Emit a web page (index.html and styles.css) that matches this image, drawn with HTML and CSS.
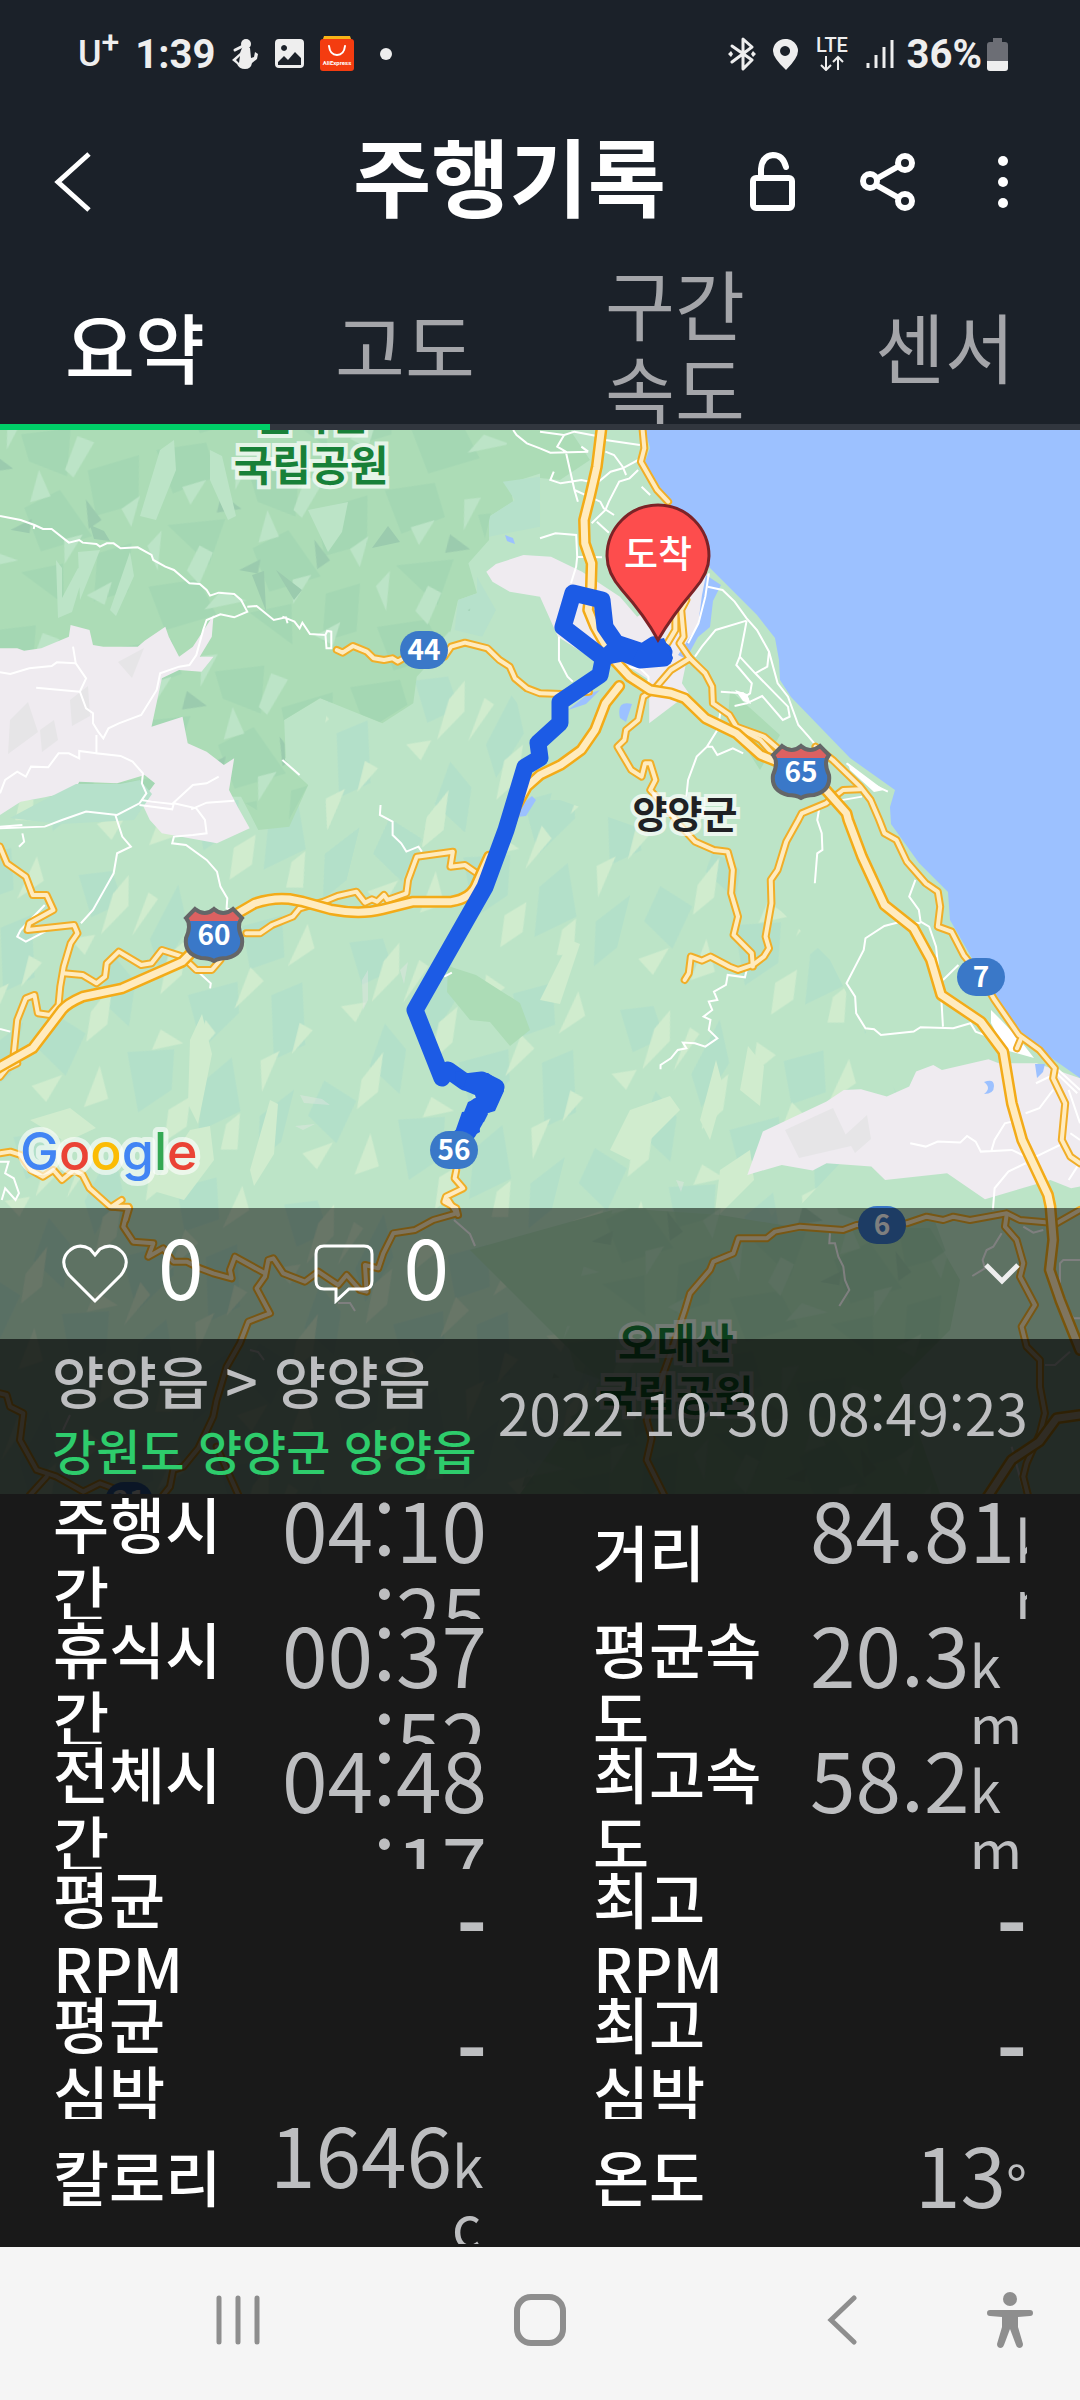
FILE: index.html
```html
<!DOCTYPE html>
<html lang="ko">

<head>
    <meta charset="UTF-8" />
    <meta name="viewport" content="width=device-width, initial-scale=1.0" />
    <title>주행기록</title>
    <link rel="stylesheet" href="styles.css">
</head>

<body>
    <div class="status-bar">
        <div class="status-left">
            <span class="carrier">U<sup>+</sup></span>
            <span class="clock">1:39</span>
            <svg width="28" height="32" viewBox="0 0 28 32">
                <circle cx="15" cy="6" r="5" fill="#eee" />
                <path d="M11 10h8l1 10 3-1 1-5 3 2-1 5-5 4q-1 6-7 6T6 26L1 22l8-7zM9 18l-4 4 3 3z" fill="#eee" fill-rule="evenodd" />
                <path d="M4 12l8-4" stroke="#eee" stroke-width="3" stroke-linecap="round" />
            </svg>
            <svg width="29" height="30" viewBox="0 0 29 30">
                <path d="M4 0h21q4 0 4 4v21q0 4-4 4H4q-4 0-4-4V4q0-4 4-4zM9 6a3 3 0 1 0 .1 0zM3 23v3h23v-7l-6-6-7 8-4-4z" fill="#eee" fill-rule="evenodd" />
            </svg>
            <svg width="34" height="36" viewBox="0 0 34 36">
                <path d="M4 0h26l2 6H2z" fill="#f9b417" />
                <rect y="3" width="34" height="32" rx="3" fill="#f43c10" />
                <path d="M9 10q1 9 8 9t8-9" fill="none" stroke="#fff" stroke-width="2" stroke-linecap="round" />
                <text x="17" y="29" class="ali">AliExpress</text>
            </svg>
            <svg class="more-dot" width="12" height="12" viewBox="0 0 12 12"><circle cx="6" cy="6" r="6" fill="#eee" /></svg>
        </div>
        <div class="status-right">
            <svg width="28" height="34" viewBox="0 0 28 34">
                <path d="M4 9l20 14-9 9V2l9 8L4 25" fill="none" stroke="#eee" stroke-width="3" stroke-linejoin="round" stroke-linecap="round" />
                <path d="M0 17l3-3 2 3-2 3zM28 17l-3-3-2 3 2 3z" fill="#eee" />
            </svg>
            <svg width="25" height="31" viewBox="0 0 25 31">
                <path d="M12 0a12 12 0 0 1 13 12q0 7-12 19Q0 19 0 12A12 12 0 0 1 12 0zM12 7a5 5 0 1 0 .1 0z" fill="#eee" fill-rule="evenodd" />
            </svg>
            <svg class="lte" width="34" height="34" viewBox="0 0 34 34">
                <text x="17" y="15">LTE</text>
                <path d="M11 19v13M6 28l5 5 5-5M23 33V20M18 25l5-5 5 5" fill="none" stroke="#eee" stroke-width="2" />
            </svg>
            <svg width="28" height="30" viewBox="0 0 28 30">
                <path d="M2 24v5M10 16v13M18 8v21M26 1v28" stroke="#eee" stroke-width="3" />
            </svg>
            <span class="battery-text">36%</span>
            <svg width="21" height="33" viewBox="0 0 21 33">
                <path d="M6 0h9v4h3q3 0 3 3v16H0V7q0-3 3-3h3z" fill="#6c6e75" />
                <path d="M0 23h21v7q0 3-3 3H3q-3 0-3-3z" fill="#eee" />
            </svg>
        </div>
    </div>

    <header class="header">
        <button class="back" aria-label="뒤로">
            <svg width="38" height="60" viewBox="0 0 38 60"><path d="M35 2L4 30l31 28" fill="none" stroke="#fff" stroke-width="5" /></svg>
        </button>
        <h1>주행기록</h1>
        <button class="action" aria-label="공개 설정">
            <svg width="46" height="60" viewBox="0 0 46 60">
                <rect x="3" y="26" width="39" height="30" rx="3" fill="none" stroke="#fff" stroke-width="6" />
                <path d="M11 26v-9q1-13 12-14 10 0 13 12" fill="none" stroke="#fff" stroke-width="6" stroke-linecap="round" />
            </svg>
        </button>
        <button class="action share" aria-label="공유">
            <svg width="56" height="58" viewBox="0 0 56 58">
                <g fill="none" stroke="#fff" stroke-width="6">
                    <path d="M16 26l23-13M16 32l23 13" />
                    <circle cx="10" cy="28" r="7" />
                    <circle cx="45" cy="10" r="7" />
                    <circle cx="45" cy="48" r="7" />
                </g>
            </svg>
        </button>
        <button class="action" aria-label="더보기">
            <svg width="10" height="52" viewBox="0 0 10 52" fill="#fff">
                <circle cx="5" cy="5" r="5" /><circle cx="5" cy="26" r="5" /><circle cx="5" cy="47" r="5" />
            </svg>
        </button>
    </header>

    <div class="tabs" role="tablist">
        <button role="tab" class="tab active" aria-selected="true">요약</button>
        <button role="tab" class="tab">고도</button>
        <button role="tab" class="tab">구간 속도</button>
        <button role="tab" class="tab">센서</button>
    </div>

    <section class="map">
        <svg class="map-canvas" viewBox="0 430 1080 1064">
            <defs>
                <!-- terrain relief -->
                <pattern id="relief" width="310" height="270" patternUnits="userSpaceOnUse" patternTransform="rotate(14) scale(.9 1)">
                    <path class="f-teal" d="M10 20l35-12 20 28-30 22zM120 5l22 40-18 50-20-30zM200 30l40-20 14 40-34 20zM70 90l30 20 5 45-40-20zM160 110l50-25 10 30-30 44zM250 90l30-20 20 60-30 22zM20 160l40 12-10 46-38-20zM110 180l50-14 8 40-30 30zM200 190l24-30 24 50-40 30zM270 210l30-34v54l-20 24z" />
                    <path class="f-light" d="M52 30l12-22 8 30-22 34zM90 20l12 4-18 42zM166 18l24 8-20 24zM270 12l14 22-24 24zM18 84l26-10-6 22zM128 76l16-20 4 36-18 24zM220 68l18 10-24 34zM60 150l16-32 5 40-18 22zM140 150l28 8-32 14zM186 130l14 10-20 36zM256 156l18-14-8 44zM16 236l30-18-10 30zM84 200l18 30-24 14zM170 226l20-18 4 30-20 20zM236 226l12-14 7 36-18 4zM288 110l16 4-16 28z" />
                </pattern>
                <pattern id="relief-forest" width="290" height="250" patternUnits="userSpaceOnUse" patternTransform="rotate(10) scale(.8)">
                    <path class="f-forest2" d="M0 20l60-20 20 40-50 30zM120 30l60-18 6 60-50-10zM210 60l60-30 10 60-50 24zM30 110l70-20-10 60zM140 120l40-30 50 50-60 30zM240 160l40-20 6 60-40 20zM20 190l60-20 30 40-60 30zM150 200l50-20 10 50z" />
                    <path class="f-land" d="M100 14l20-6-14 44zM190 20l22 4-18 48-12-8zM40 60l28-14-14 34zM150 70l20 30-24 12zM260 100l20-20-4 40zM10 140l14-22 4 50zM74 128l18 6-10 42-18-14zM196 150l22-10-16 40zM110 180l34 6-50 20zM236 214l28-22-4 30z" />
                    <path class="f-dark" d="M90 60l28 14-30 10zM214 96l10 36 14-14zM128 150l24-18v18z" />
                </pattern>

                <!-- highways -->
                <g id="highways">
                    <g transform="translate(540 430) scale(.3444 .3333)">
                        <path d="M178 -20V0L165 110 145 200 128 270 130 340 150 400 148 470 140 540 160 590 215 690 260 740 320 780 380 790 420 805 480 865 570 910 640 975 700 1000 760 1030 830 1080 890 1150 895 1170 935 1280 1000 1425 1085 1495 1135 1590 1165 1695 1280 1775 1345 1865 1370 2020 1400 2130 1475 2295 1482 2330 1490 2430 1480 2520 1510 2610 1568 2760" />
                        <path d="M230 768L190 820 160 900 120 960 60 1005 0 1035 -38 1070 -70 1130 -100 1220" />
                        <path d="M1568 2955L1500 2965 1450 3035 1370 3090 1300 3200" />
                    </g>
                    <g transform="translate(0 820) scale(.3444 .3333)">
                        <path d="M-20 752L0 740 95 685 180 570Q195 550 240 530L355 505 530 425 640 310 740 250Q790 232 840 237L880 245 960 268Q1045 285 1110 268L1200 245H1310Q1370 235 1385 190L1420 110" />
                    </g>
                </g>

                <!-- national and local roads -->
                <g id="roads">
                    <g transform="translate(0 430) scale(.3444 .3333)">
                        <path d="M978 660L995 668 1025 648 1065 665 1085 685 1115 690 1140 685 1155 695 1180 680 1290 680 1310 650 1350 638 1415 655 1450 690 1480 710 1495 745 1530 775 1568 790 1630 792 1710 785" />
                    </g>
                    <g transform="translate(540 430) scale(.3444 .3333)">
                        <path d="M298 -20V0L303 55 293 95 340 180 372 215" />
                        <path d="M425 510L410 540 417 620 405 640 435 685 480 730 500 770 502 820 550 855 570 890 650 920 690 955 740 970M800 950L850 990 930 1070 960 1110 985 1170 1000 1210 1035 1230 1065 1295 1120 1360 1155 1385 1162 1430 1155 1490 1195 1505 1230 1575 1280 1640 1320 1710 1390 1815 1450 1860 1495 1915 1490 1945 1525 2020 1515 2130 1540 2180 1568 2200" />
                        <path d="M393 520V600L370 640M570 890L640 930 700 1000M1395 1830L1385 1855" />
                        <path d="M435 685L380 720 330 780 300 800 285 870 250 900 245 930 225 950 265 1020 295 1040 305 1000 320 1000 335 1050 320 1080 380 1150 410 1190 450 1235 505 1260 545 1265 560 1320 555 1390 575 1460 562 1515 615 1570 618 1610" />
                        <path d="M930 1078L880 1080 830 1120 760 1150 750 1170 715 1235 690 1320 670 1350 672 1420 655 1520 665 1555 650 1580 618 1605 575 1620 550 1610 495 1580 470 1592 438 1580 432 1630 420 1650" />
                    </g>
                    <g transform="translate(0 820) scale(.3444 .3333)">
                        <path d="M0 80L20 130 75 170 95 225 135 225 155 270 85 310 80 330 215 315 225 340 205 370 185 440 175 500 170 555 145 585 110 580 100 525 75 535 50 600 40 700M50 730L20 745 0 770" />
                        <path d="M185 460L240 465 280 490 305 470 310 430 345 395 410 435 440 430 470 390 530 410 570 450 615 450 640 420M715 340L755 340 790 315 850 290 870 265 940 245 980 228 1035 215 1060 248 1080 238 1095 245 1115 225 1125 240 1180 220 1185 180 1210 110 1315 95 1308 140 1350 135 1385 160" />
                        <path d="M0 1000L30 995 60 1005 90 1050 125 1070 155 1050 180 1080 215 1050 240 1065 260 1105 320 1160 375 1165 365 1200" />
                        <path d="M1325 1050L1320 1075 1345 1105 1295 1130 1290 1145 1325 1165 1330 1185" />
                    </g>
                    <g transform="translate(0 1200) scale(.3333)">
                        <path d="M365 0L335 20 385 20 370 80 400 125 460 130 445 170 490 145 520 185 560 185 600 205 640 220 695 235 690 210 705 170 795 220" />
                        <path d="M1345 0L1370 40 1300 60 1245 90 1180 100 1150 160 1135 205 1095 195 1100 275 1080 270 1040 225 1015 255 955 215 915 245 850 220 820 175 805 180 795 230 770 265 810 340 745 365 720 430 680 500 650 600 640 650 595 745 550 800 520 810 510 860 490 885" />
                        <path d="M0 580L20 585 30 620 70 640 60 720 110 810 170 830 250 875 300 850 340 865M140 830L90 885M650 740L715 885" />
                    </g>
                    <g transform="translate(560 1200) scale(.3333)">
                        <path d="M315 890L290 840 260 780 275 715 260 660 325 480 375 330 390 280 450 210 460 185 520 160 535 115 620 115 645 95 720 80 850 90 890 75 1040 70 1100 50 1150 60 1180 50 1230 60 1340 40 1380 60 1490 70 1560 30" />
                        <path d="M1340 45L1335 80 1370 120 1390 190 1380 230 1425 315 1385 380 1400 440 1440 480 1440 560 1455 640 1440 700 1400 790 1390 830 1405 890" />
                    </g>
                </g>

                <g id="interstate">
                    <path d="M-19 -25Q-9 -17 0 -25 9 -17 19 -25L28 -16Q22 -9 28 4 30 20 13 24 5 24 0 27 -5 24 -13 24 -30 20 -28 4 -22 -9 -28 -16z" fill="#3a78c8" />
                    <path d="M-19 -25Q-9 -17 0 -25 9 -17 19 -25L26 -16 24 -13H-24L-26 -16z" fill="#dc6161" />
                    <path d="M-19 -25Q-9 -17 0 -25 9 -17 19 -25L28 -16Q22 -9 28 4 30 20 13 24 5 24 0 27 -5 24 -13 24 -30 20 -28 4 -22 -9 -28 -16z" fill="none" stroke="#646668" stroke-width="4" />
                </g>
                <rect id="badge" x="-24" y="-19" width="48" height="38" rx="19" fill="#3a78c8" />
            </defs>

            <rect class="f-land" y="430" width="1080" height="1064" />
            <path d="M0 800H560L730 860 830 960 900 1100 720 1290 620 1494H0z" fill="url(#relief)" />
            <path d="M330 690L470 640 560 760 540 840 300 900z" fill="url(#relief)" />

            <!-- longer ridges -->
            <path class="f-light" d="M190 1040l12-26 10 40-14 70-10-20zM250 1170l20-70 8 4-4 50-20 32zM150 1190l40-60 20-4 4 34-30 40zM540 1000l30-60 10 4-20 60zM700 1120l16-60 8 30-14 50zM740 1090l8-44 16 20-4 40zM610 1150l20-40 40-14 10 14-50 50zM720 1170l30-20 4 30-40 40zM30 1120l40-12 26 20-30 14z" />
            <path class="f-shade" opacity=".4" d="M362 980l6-10v30l-5 10zM300 1095l22 4 8 6-26-2zM295 1126l20-2-12 6zM400 970l8-8-4 22zM676 1180l8 2-3 10z" />

            <!-- national parks -->
            <g transform="translate(0 430) scale(.3444 .3333)">
                <path class="f-forest" d="M0 0H1660L1600 120 1480 160 1490 215 1420 260V330L1360 400 1385 490 1330 510 1300 640 1210 740 1200 820 1110 880 930 805 825 870 830 985 815 990 895 1065 840 1190 750 1200 700 1100H0z" />
                <path class="f-mist" d="M1460 155L1568 140V290L1420 320V260L1495 210zM1385 440L1440 540 1400 620 1320 600 1330 510 1385 490z" />
            </g>
            <path d="M0 430H510L480 560 470 610 445 650 415 700 380 722 320 698 284 720 285 760 308 785 285 827 240 800H0z" fill="url(#relief-forest)" />
            <path class="f-land" d="M160 450l14-10 2 30-20 50-16-4zM56 560l6 8v30l16-30 6 4-12 40-14 6zM308 510l40-8-6 30-14 20zM210 450l12 6 14 60-8 4-18-40zM78 552l22-2-20 50zM130 552l4 24-18 40-6-6z" />
            <path class="f-dark" d="M252 575l14 36-2-40zM276 570l26 20-8 10zM90 525l14 6 6 10-16-2zM372 548l16-22 12 16z" />
            <path class="f-forest" d="M540 430H570L590 460 560 480 540 478zM730 690L780 735 760 770 728 720zM448 966L476 975 520 1003 530 1030 510 1046 490 1022 470 1020 447 992z" />
            <path class="f-forest" d="M620 1208L720 1215 800 1228 930 1228 960 1280 950 1330 900 1380 940 1494H520L600 1380 470 1250z" />
            <path d="M600 1208H930L960 1290 930 1494H520z" fill="url(#relief-forest)" opacity=".6" />

            <!-- settlements -->
            <g transform="translate(0 430) scale(.3444 .3333)" class="f-urban">
                <path d="M0 655L50 655 70 662 120 655 200 620 205 585 260 600 270 645 300 650 400 650 420 632 480 590 490 620 520 680 560 650 620 555 615 620 580 680 620 680 585 725 520 720 470 745 440 890 530 860 545 940 600 965 650 1005 680 985 665 1080 690 1130 725 1195 630 1240 470 1210 435 1170 410 1115 450 1060 420 1035 340 1060 230 1055 215 1085 60 1115 0 1155z" />
                <path d="M1412 425L1440 402 1520 375 1600 380 1690 425 1800 500 1850 560 1740 700 1620 620 1568 500 1480 485 1430 455z" />
                <path d="M1850 560L2060 430 2060 560 2000 660 1980 760 2000 790 1885 880V750L1720 640z" />
                <path d="M2170 2235L2215 2105 2400 2015 2450 1980 2500 1978 2575 2000 2640 1970 2660 1925 2710 1905 2735 1920 2870 1888 2900 1900 3010 1900 3136 1945V2270L3110 2275 3050 2250 2860 2308 2750 2230 2570 2250 2530 2210 2400 2200 2360 2222 2270 2205z" />
            </g>
            <path class="f-shade" d="M10 720l18-18 10 30-30 22zM40 730l14-10 4 20-16 12zM785 1130l48-22 18 38-52 12zM845 1135l22-20 4 24-16 14zM118 662l26-14-12 30zM70 700l18-14 2 30-18 10z" />
            <path class="f-mist" d="M76 784L120 784 140 780 152 794 134 820 60 824 10 818 40 802z" />

            <!-- sea -->
            <path d="M645 430L650 448 645 462 669 502 710 568 757 615 775 638 779 660 780 680 791 697 850 758 895 790 890 807 891 824 919 863 948 892 950 920 969 953 988 987 1000 1013 1050 1057 1080 1078V430z" fill="#9cc1ff" />
            <path d="M706 575l15 10-8 16-3 26-12 10-12 22-8-4 20-30 4-30zM1035 1064l10 0-2 8-6 6zM505 535l8 3 2 6-8-3zM536 800l-10 16-18 2 12-12 12-10zM600 690l-14 14-18 6 20-16zM632 704q-16-4-12 14l6 4M984 1082q10-4 10 4t-10 8q8-6 0-12z" fill="#9cc1ff" />

            <!-- side streets -->
            <g class="streets">
                <g transform="translate(0 430) scale(.3444 .3333)">
                    <path d="M0 258L60 270 100 285 98 297M100 285L125 297 150 297 200 338 230 330 240 338 280 342 290 350 310 340 330 340 350 355 400 352 440 375 445 390 480 410 505 420 550 460 580 462 600 480 610 497 635 488 680 492 700 510 718 545 680 562 640 553 600 570 590 600 570 675 550 705 520 710 465 730 455 780 410 855 345 880 315 895 300 925 285 905 270 880 270 850 250 835 232 785 250 745 220 700 212 650" />
                    <path d="M220 700L165 697 150 708 85 715 30 732 0 727M105 773L232 785M718 530L745 528 795 570 830 562 835 580M820 560L855 575 870 595 878 578 900 612 945 615 950 603 962 605V655H948L945 615M280 915V970L350 978 385 995 415 1030 412 1060 425 1090 405 1120 340 1155 250 1145 180 1170 130 1190 0 1195M280 970L230 963 230 985 200 970 170 970 140 1012 90 1010 75 1040 50 1025 15 1050 0 1090" />
                    <path d="M410 1110L440 1115 500 1122 560 1065 600 1060 635 1040M405 1125L500 1138 505 1120 570 1135 595 1170 600 1210 560 1215 505 1220 500 1240 540 1245 600 1290 630 1325 640 1370 660 1405 658 1435 670 1440M555 1138L600 1118 680 1112M335 1155L355 1220 380 1250 340 1270 330 1330 300 1385 270 1440 235 1480M1105 1125L1103 1155 1140 1175V1215L1165 1240 1180 1265 1215 1250 1225 1265M1490 0L1500 15 1530 40 1568 55M820 990L870 1035M580 1630L612 1660 610 1675M130 1425L60 1500 50 1520 75 1535 140 1500M0 1797L30 1805M1290 1640L1312 1628" />
                </g>
                <g transform="translate(540 430) scale(.3444 .3333)">
                    <path d="M0 5L70 15 50 50 75 65 100 180 110 215M0 55L30 68 140 65M70 15L100 5 165 18M190 30L290 45M190 65L215 75 240 110 250 135M140 65L120 50M285 120L260 145 230 155 200 215 190 240 150 280M295 170L320 195M40 125L30 150 60 160 120 150 165 160M165 160L205 125 240 115 285 90M100 180L175 215 185 235 215 255M165 275L200 308M0 325L45 310 105 315 108 380 105 410 90 460M108 380L180 382M487 470L530 480 565 515 600 565 630 600 665 665 690 760 720 800 750 885 780 920 800 945" />
                    <path d="M490 430L480 500 460 580 430 640M600 572L510 600 470 650 450 680M600 572L595 600 580 680 570 705 615 760 610 790 595 800M580 680L625 730 720 830 725 860 705 870 645 798 600 820 565 828M625 730L660 710 665 665M525 785L590 790 605 810M525 840L515 900 485 950 455 980 430 1050 425 1100M485 950L500 950 515 975 560 955 590 970M55 620L55 690 80 740 95 755M245 710L290 715 315 740V780M890 1000L960 1060 1010 1085M850 1115L935 1100M810 1140L805 1170 818 1210 820 1260 805 1270 798 1360M1090 1350L1072 1400 1100 1440 1105 1475 1130 1490 1150 1550 1165 1700 1170 1790M1105 1480L1050 1475 1000 1488 945 1525 940 1560 915 1610 890 1660 915 1700 918 1750 945 1795 970 1798 990 1815 1085 1805 1105 1792 1200 1795 1250 1780 1265 1805 1290 1815M1215 1605L1170 1650" />
                    <path d="M600 1620L595 1642 545 1635 540 1665 505 1685 515 1710 490 1715 500 1740 475 1760 495 1770 490 1800 515 1825 480 1850 450 1840 415 1838 425 1855 400 1860 380 1885 350 1905V1918M1075 2140L1120 2150 1155 2135 1220 2138 1240 2118 1265 2135 1280 2165 1370 2160 1410 2180M1310 2165L1320 2130 1350 2080 1370 2075M1410 2050L1450 2035 1490 1980M1440 1960L1500 1930 1560 1990M1410 2200L1360 2225 1320 2275 1315 2340M1440 2180L1520 2140M1500 1915L1568 1980M1535 1980L1568 2080M1540 2110L1568 2130M1535 2250L1560 2210" />
                </g>
                <g transform="translate(0 820) scale(.3444 .3333)">
                    <path d="M0 1025H25L15 1060 40 1075 55 1120 45 1140 15 1105 5 1140M0 20L65 15M65 40L70 65 55 80" />
                </g>
                <g transform="translate(560 1200) scale(.3333)">
                    <path d="M810 100L808 130 825 130 835 170 850 200 855 240 868 270 838 318M1325 100L1300 140 1280 150 1268 180 1275 205 1237 228M1390 80L1420 98 1450 90M1500 250V190L1510 180H1560M1520 320L1540 355H1560M1455 495H1485L1530 455M1355 740L1390 870" />
                </g>
                <path d="M454 1220L470 1234 475 1246M338 1303H350L355 1311M250 1350l8 2 6 8M70 1415l-7 15" />
            </g>
            <path d="M991 1010l10 10 19 20 14 18-29-8-14-27zM848 763l36 27-10 2-24-22zM735 690l12 4 4 10-8-3z" fill="#fff" />

            <use href="#roads" class="road-edge" />
            <use href="#roads" class="road-core" />
            <use href="#highways" class="highway-edge" />
            <use href="#highways" class="highway-core" />

            <!-- place names -->
            <text class="place park-name" x="311" y="430">설악산</text>
            <text class="place park-name" x="311" y="481">국립공원</text>
            <text class="place" x="685" y="828">양양군</text>
            <text class="place park-name" x="676" y="1359">오대산</text>
            <text class="place park-name" x="676" y="1411">국립공원</text>

            <!-- ridden track -->
            <path class="track" d="M664 652L654 645 643 652 616 643 605 627 602 600 573 593 563 627 602 657 623 653 640 660 664 658 658 648M654 655H640L616 648 603 660 600 675 560 702V723L538 743 540 758 525 767 506 830 485 887 415 1010 442 1078 448 1070 465 1082 482 1080 496 1087 488 1104 478 1106 475 1120 468 1132 456 1140" />
            <path d="M640 646L651 637 655 640 664 638 673 658 670 664 655 666 640 668 633 660zM455 1071L462 1072V1087L456 1082zM468 1073h20l14 10 2 8-9 20-14 4-6-20-12-5zM468 1102l14-6 6 18-4 8-16 8-8-8zM462 1112l16-2 2 22-18 10-7-10z" fill="#1c5be5" />

            <!-- road numbers -->
            <g class="road-number">
                <use href="#badge" x="424" y="650" /><text x="424" y="660">44</text>
                <use href="#badge" x="454" y="1150" /><text x="454" y="1160">56</text>
                <use href="#badge" x="981" y="977" /><text x="981" y="987">7</text>
                <use href="#badge" x="882" y="1225" /><text x="882" y="1235">6</text>
                <use href="#badge" x="129" y="1501" /><text x="129" y="1511">21</text>
                <use href="#interstate" x="801" y="771" /><text x="801" y="782">65</text>
                <use href="#interstate" x="214" y="934" /><text x="214" y="945">60</text>
            </g>

            <!-- finish pin -->
            <path d="M658 640Q645 616 622 590 607 573 607 556A51 51 0 0 1 709 556Q709 573 694 590 672 616 658 640z" fill="#fd4d4d" stroke="#7c2327" stroke-width="3" />
            <text class="pin-text" x="658" y="568">도착</text>

            <text class="google" x="20" y="1170"><tspan fill="#4285f4">G</tspan><tspan fill="#ea4335">o</tspan><tspan fill="#fbbc05">o</tspan><tspan fill="#4285f4">g</tspan><tspan fill="#34a853">l</tspan><tspan fill="#ea4335">e</tspan></text>
        </svg>

        <div class="map-overlay">
            <div class="reactions">
                <button class="reaction" aria-label="좋아요">
                    <svg width="66" height="60" viewBox="0 0 66 60"><path d="M33 57L7 31Q-3 18 6 8 16-2 28 5L33 11 38 5Q50-2 60 8 69 18 59 31z" fill="none" stroke="#fff" stroke-width="3" /></svg>
                    <span>0</span>
                </button>
                <button class="reaction" aria-label="댓글">
                    <svg width="60" height="60" viewBox="0 0 60 60"><path d="M10 2h40q8 0 8 8v27q0 8-8 8H35L22 57V45H10q-8 0-8-8V10q0-8 8-8z" fill="none" stroke="#fff" stroke-width="3" /></svg>
                    <span>0</span>
                </button>
                <button class="collapse" aria-label="접기">
                    <svg width="36" height="22" viewBox="0 0 36 22"><path d="M2 2l16 16L34 2" fill="none" stroke="#eee" stroke-width="5" /></svg>
                </button>
            </div>
            <div class="ride-info">
                <div>
                    <p class="course">양양읍 &gt; 양양읍</p>
                    <p class="region">강원도 양양군 양양읍</p>
                </div>
                <time class="date">2022-10-30 08:49:23</time>
            </div>
        </div>
    </section>

    <dl class="stats">
        <div class="stat"><dt>주행시간</dt><dd><span class="time">04:10:25</span></dd></div>
        <div class="stat"><dt>거리</dt><dd><span>84.81</span><span class="unit">km</span></dd></div>
        <div class="stat"><dt>휴식시간</dt><dd><span class="time">00:37:52</span></dd></div>
        <div class="stat"><dt>평균속도</dt><dd><span>20.3</span><span class="unit">km/h</span></dd></div>
        <div class="stat"><dt>전체시간</dt><dd><span class="time">04:48:17</span></dd></div>
        <div class="stat"><dt>최고속도</dt><dd><span>58.2</span><span class="unit">km/h</span></dd></div>
        <div class="stat"><dt>평균 RPM</dt><dd class="empty">-</dd></div>
        <div class="stat"><dt>최고 RPM</dt><dd class="empty">-</dd></div>
        <div class="stat"><dt>평균 심박</dt><dd class="empty">-</dd></div>
        <div class="stat"><dt>최고 심박</dt><dd class="empty">-</dd></div>
        <div class="stat"><dt>칼로리</dt><dd><span>1646</span><span class="unit">kcal</span></dd></div>
        <div class="stat"><dt>온도</dt><dd><span>13</span><span class="unit">°</span></dd></div>
    </dl>

    <nav class="nav-bar">
        <button aria-label="최근 앱">
            <svg width="46" height="50" viewBox="0 0 46 50"><path d="M4 3v44M23 3v44M42 3v44" stroke="#8e8e8e" stroke-width="5" stroke-linecap="round" /></svg>
        </button>
        <button aria-label="홈">
            <svg width="52" height="52" viewBox="0 0 52 52"><rect x="3" y="3" width="46" height="46" rx="14" fill="none" stroke="#8e8e8e" stroke-width="6" /></svg>
        </button>
        <button aria-label="뒤로">
            <svg width="30" height="50" viewBox="0 0 30 50"><path d="M27 3L4 25l23 22" fill="none" stroke="#8e8e8e" stroke-width="5" stroke-linecap="round" /></svg>
        </button>
        <button aria-label="접근성">
            <svg width="46" height="56" viewBox="0 0 46 56" fill="#8e8e8e">
                <circle cx="23" cy="7" r="7" />
                <path d="M3 18h40q3 0 3 3t-3 3l-12 1v10l5 17q0 4-4 4-2 0-3-3l-6-16-6 16q-1 3-3 3-4 0-4-4l5-17V25L3 24q-3 0-3-3t3-3z" />
            </svg>
        </button>
    </nav>
</body>

</html>
```
FILE: styles.css
```css
* {
    box-sizing: border-box;
}

body {
    margin: 0;
    min-height: 100vh;
    display: flex;
    flex-direction: column;
    background: #1b2129;
    color: #fff;
    font-family: 'Noto Sans CJK KR', sans-serif;
}

button {
    display: flex;
    align-items: center;
    justify-content: center;
    min-width: 0;
    padding: 0;
    border: none;
    background: none;
    color: inherit;
    font: inherit;
    cursor: pointer;
}

svg {
    display: block;
    flex: none;
}

h1,
p,
dl,
dd {
    margin: 0;
}

/* phone status bar */
.status-bar {
    display: flex;
    justify-content: space-between;
    height: 108px;
    padding: 0 72px 0 78px;
    color: #eee;
    font-family: Roboto, sans-serif;
    font-size: 40px;
    font-weight: 700;
}

.status-left,
.status-right {
    display: flex;
    align-items: center;
    gap: 16px;
}

.status-right {
    gap: 17px;
}

.carrier {
    font-size: 36px;
    font-weight: 500;
}

.carrier sup {
    font-size: 32px;
    line-height: 0;
}

.more-dot {
    margin-left: 10px;
}

.battery-text {
    margin: 0 -12px 0 -4px;
}

.ali {
    fill: #fff;
    font-size: 6px;
    text-anchor: middle;
}

.lte text {
    fill: #eee;
    font-size: 20px;
    font-weight: 500;
    text-anchor: middle;
}

/* header */
.header {
    display: flex;
    height: 148px;
    padding: 0 20px 0 54px;
}

.header h1 {
    flex: 1;
    text-align: center;
    white-space: nowrap;
    font-size: 85px;
    line-height: 132px;
    font-weight: 700;
}

.back {
    width: 250px;
    justify-content: flex-start;
}

.action {
    width: 115px;
}

.tabs {
    display: grid;
    grid-template-columns: repeat(4, 1fr);
    height: 174px;
}

.tab {
    height: 174px;
    padding-top: 10px;
    overflow: hidden;
    border-bottom: 6px solid #31363e;
    color: #a4a5a9;
    font-size: 76px;
    line-height: 86px;
    word-break: keep-all;
}

.tab.active {
    border-color: #00cf68;
    color: #fff;
    font-weight: 500;
}

/* map */
.map {
    display: grid;
}

.map-canvas,
.map-overlay {
    grid-area: 1 / 1;
}

.map-canvas {
    width: 100%;
    height: auto;
}

.map-overlay {
    align-self: end;
}

.f-land { fill: #bce4c7; }
.f-light { fill: #d0ecce; }
.f-teal { fill: #b3e0c9; }
.f-forest { fill: #acdcb6; }
.f-forest2 { fill: #a4d7b3; }
.f-dark { fill: #9bcbae; }
.f-mist { fill: #b6e1cb; }
.f-urban { fill: #efebf0; }
.f-shade { fill: #e6e5e7; }

.streets path {
    fill: none;
    stroke: #fff;
    stroke-width: 2;
    vector-effect: non-scaling-stroke;
}

#roads path,
#highways path {
    fill: none;
    stroke-linejoin: round;
    stroke-linecap: round;
    vector-effect: non-scaling-stroke;
}

.road-edge {
    stroke: #f1ae28;
    stroke-width: 8;
}

.road-core {
    stroke: #ffebbf;
    stroke-width: 4;
}

.highway-edge {
    stroke: #f3ab18;
    stroke-width: 12;
}

.highway-core {
    stroke: #ffebbf;
    stroke-width: 7;
}

.track {
    fill: none;
    stroke: #1c5be5;
    stroke-width: 17;
    stroke-linejoin: round;
    stroke-linecap: round;
}

.place {
    fill: #202124;
    stroke: rgba(255, 255, 255, .7);
    stroke-width: 8;
    paint-order: stroke;
    font-size: 38px;
    font-weight: 700;
    text-anchor: middle;
}

.park-name {
    fill: #188038;
    font-size: 42px;
}

.road-number text {
    fill: #fff;
    font-size: 28px;
    font-weight: 700;
    text-anchor: middle;
}

.pin-text {
    fill: #fff;
    font-size: 37px;
    font-weight: 500;
    text-anchor: middle;
}

.google {
    font-family: Inter, sans-serif;
    font-size: 52px;
    font-weight: 500;
    stroke: rgba(255, 255, 255, .6);
    stroke-width: 10;
    stroke-linejoin: round;
    paint-order: stroke;
}

/* panels over the map */
.reactions {
    display: flex;
    align-items: center;
    height: 131px;
    padding: 0 60px 0 62px;
    background: rgba(0, 0, 0, .5);
}

.reaction {
    gap: 30px;
    margin-right: 110px;
    font-size: 82px;
    line-height: 104px;
}

.reaction span {
    padding-bottom: 18px;
}

.collapse {
    margin-left: auto;
}

.ride-info {
    display: flex;
    align-items: center;
    justify-content: space-between;
    height: 155px;
    padding: 0 52px;
    background: rgba(0, 0, 0, .81);
    color: #bdbec0;
    white-space: nowrap;
}

.course,
.date {
    font-size: 57px;
    line-height: 70px;
}

.course {
    font-weight: 500;
}

.date {
    padding-bottom: 12px;
}

.region {
    padding-bottom: 6px;
    color: #2ecc6c;
    font-size: 48px;
    font-weight: 500;
    line-height: 70px;
}

/* ride numbers */
.stats {
    display: grid;
    grid-template-columns: 1fr 1fr;
    padding-bottom: 3px;
    background: #191919;
}

.stat {
    display: grid;
    grid-template-columns: 1fr 1fr;
    align-items: safe center;
    height: 125px;
    padding: 0 53px;
    overflow: hidden;
}

.stat dt {
    margin: -6px 0 6px;
    font-size: 61px;
    font-weight: 500;
    line-height: 69px;
    word-break: keep-all;
    overflow-wrap: anywhere;
}

.stat dd {
    display: flex;
    align-items: baseline;
    justify-content: flex-end;
    margin: -9px 0 9px;
    overflow: hidden;
    color: #bdbec0;
    font-size: 82px;
    line-height: 86px;
    text-align: right;
}

.stat .time {
    line-break: anywhere;
}

.stat .unit {
    flex: 0 1 auto;
    min-width: 0;
    font-size: 57px;
    line-height: 60px;
    text-align: left;
    line-break: anywhere;
}

.stat .empty {
    margin: -15px 0 15px;
    font-weight: 700;
}

/* android navigation */
.nav-bar {
    flex: 1;
    display: grid;
    grid-template-columns: 302fr 302fr 302fr 34fr;
    padding: 0 53px 8px 87px;
    background: #f5f5f5;
}

.nav-bar button:last-child {
    margin: 0 -6px;
}
```
